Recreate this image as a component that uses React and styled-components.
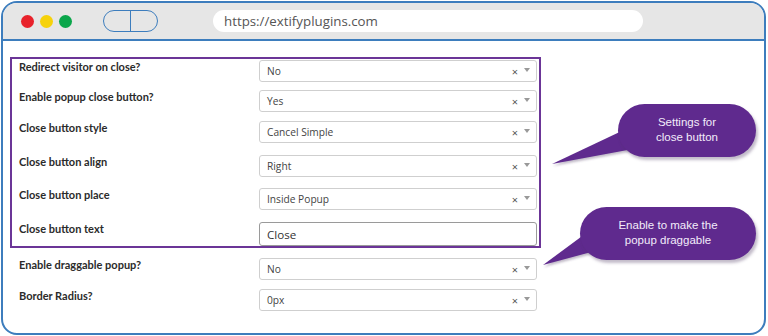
import React from "react";
import styled, { createGlobalStyle } from "styled-components";

const Global = createGlobalStyle`
  html, body { margin: 0; padding: 0; background: #fff; }
  body { width: 768px; height: 336px; overflow: hidden; font-family: "Open Sans", "Liberation Sans", sans-serif; }
  * { box-sizing: border-box; }
`;

const Frame = styled.div`
  position: relative;
  margin: 1px 2px 0 1px;
  width: 765px;
  height: 334px;
  border: 2px solid #3d7dbd;
  border-radius: 16px;
  overflow: hidden;
  background: #fff;
`;

const Header = styled.div`
  height: 38px;
  background: #e6e6e6;
  border-bottom: 2px solid #3d7dbd;
  display: flex;
  align-items: center;
  padding: 0 0 0 18px;
`;

const Dots = styled.div`
  display: flex;
  gap: 6px;
`;

const Dot = styled.span`
  width: 13px;
  height: 13px;
  border-radius: 50%;
  background: ${(p) => p.$c};
`;

const Pill = styled.div`
  margin-left: 31px;
  width: 55px;
  height: 22px;
  border: 1.5px solid #3d7dbd;
  border-radius: 11px;
  display: flex;
`;

const PillHalf = styled.span`
  flex: 1;
  & + & { border-left: 1.5px solid #3d7dbd; }
`;

const Url = styled.div`
  margin-left: 55px;
  width: 430px;
  height: 22px;
  background: #fff;
  border-radius: 11px;
  display: flex;
  align-items: center;
  padding-left: 11px;
  font-family: "Open Sans", sans-serif;
  font-size: 13.3px;
  color: #555;
`;

const Content = styled.div`
  padding: 16px 0 0 7px;
`;

const Box = styled.div`
  width: 531px;
  border: 2px solid #6b3597;
  padding: 1px 2px 0 7px;
`;

const Rest = styled.div`
  width: 531px;
  padding: 10px 4px 0 9px;
`;

const Row = styled.div`
  display: grid;
  grid-template-columns: 240px 278px;
  align-items: start;
  height: ${(p) => p.$h}px;
`;

const Label = styled.div`
  font-family: "Lato", "Liberation Sans", sans-serif;
  font-weight: 700;
  font-size: 11px;
  line-height: 14px;
  color: #2b2b2b;
`;

const Select = styled.div`
  height: 22px;
  border: 1px solid #cfcfcf;
  border-radius: 3px;
  background: #fff;
  display: flex;
  align-items: center;
  padding: 0 6px 0 7px;
  font-family: "Open Sans", sans-serif;
  font-size: 10.2px;
  color: #444;
`;

const Value = styled.span`
  flex: 1;
`;

const Clear = styled.span`
  font-size: 11px;
  color: #555;
  margin-right: 6px;
  line-height: 1;
`;

const Caret = styled.span`
  width: 0;
  height: 0;
  border-left: 3px solid transparent;
  border-right: 3px solid transparent;
  border-top: 4px solid #999;
  margin-top: -3px;
`;

const Input = styled.div`
  height: 24px;
  border: 1px solid #9a9a9a;
  border-radius: 3px;
  display: flex;
  align-items: center;
  padding-left: 7px;
  font-family: "Open Sans", sans-serif;
  font-size: 11.6px;
  color: #333;
`;

const Bubble = styled.div`
  position: absolute;
  left: ${(p) => p.$x}px;
  top: ${(p) => p.$y}px;
  width: ${(p) => p.$w}px;
  height: 53px;
  border-radius: 27px;
  background: #5f2a8e;
  box-shadow: 2px 3px 3px rgba(80, 60, 100, 0.35);
  display: flex;
  align-items: center;
  justify-content: center;
  text-align: center;
  font-family: "Liberation Sans", Arial, sans-serif;
  font-size: 11.5px;
  line-height: 15px;
  color: #f3ecfa;
  padding-bottom: 2px;
`;

const Tail = styled.svg`
  position: absolute;
  left: 0;
  top: 0;
  pointer-events: none;
  overflow: visible;
`;

function Sel({ v }) {
  return (
    <Select>
      <Value>{v}</Value>
      <Clear>×</Clear>
      <Caret />
    </Select>
  );
}

export default function App() {
  return (
    <>
      <Global />
      <Frame>
        <Header>
          <Dots>
            <Dot $c="#e8222b" />
            <Dot $c="#f6d20b" />
            <Dot $c="#0ba64b" />
          </Dots>
          <Pill>
            <PillHalf />
            <PillHalf />
          </Pill>
          <Url>https://extifyplugins.com</Url>
        </Header>
        <Content>
          <Box>
            <Row $h={30}>
              <Label>Redirect visitor on close?</Label>
              <Sel v="No" />
            </Row>
            <Row $h={31}>
              <Label>Enable popup close button?</Label>
              <Sel v="Yes" />
            </Row>
            <Row $h={34}>
              <Label>Close button style</Label>
              <Sel v="Cancel Simple" />
            </Row>
            <Row $h={33}>
              <Label>Close button align</Label>
              <Sel v="Right" />
            </Row>
            <Row $h={34}>
              <Label>Close button place</Label>
              <Sel v="Inside Popup" />
            </Row>
            <Row $h={24}>
              <Label>Close button text</Label>
              <Input>Close</Input>
            </Row>
          </Box>
          <Rest>
            <Row $h={31}>
              <Label>Enable draggable popup?</Label>
              <Sel v="No" />
            </Row>
            <Row $h={31}>
              <Label>Border Radius?</Label>
              <Sel v="0px" />
            </Row>
          </Rest>
        </Content>
        <Tail width="765" height="334">
          <defs>
            <filter id="sh" x="-20%" y="-20%" width="140%" height="160%">
              <feDropShadow dx="1" dy="2" stdDeviation="1.2" floodColor="#503c64" floodOpacity="0.35" />
            </filter>
          </defs>
          <polygon points="623,126 549,161 630,146" fill="#5f2a8e" filter="url(#sh)" />
          <polygon points="586,228 540,262 592,248" fill="#5f2a8e" filter="url(#sh)" />
        </Tail>
        <Bubble $x={615} $y={101} $w={138}>
          Settings for
          <br />
          close button
        </Bubble>
        <Bubble $x={577} $y={204} $w={176}>
          Enable to make the
          <br />
          popup draggable
        </Bubble>
      </Frame>
    </>
  );
}
